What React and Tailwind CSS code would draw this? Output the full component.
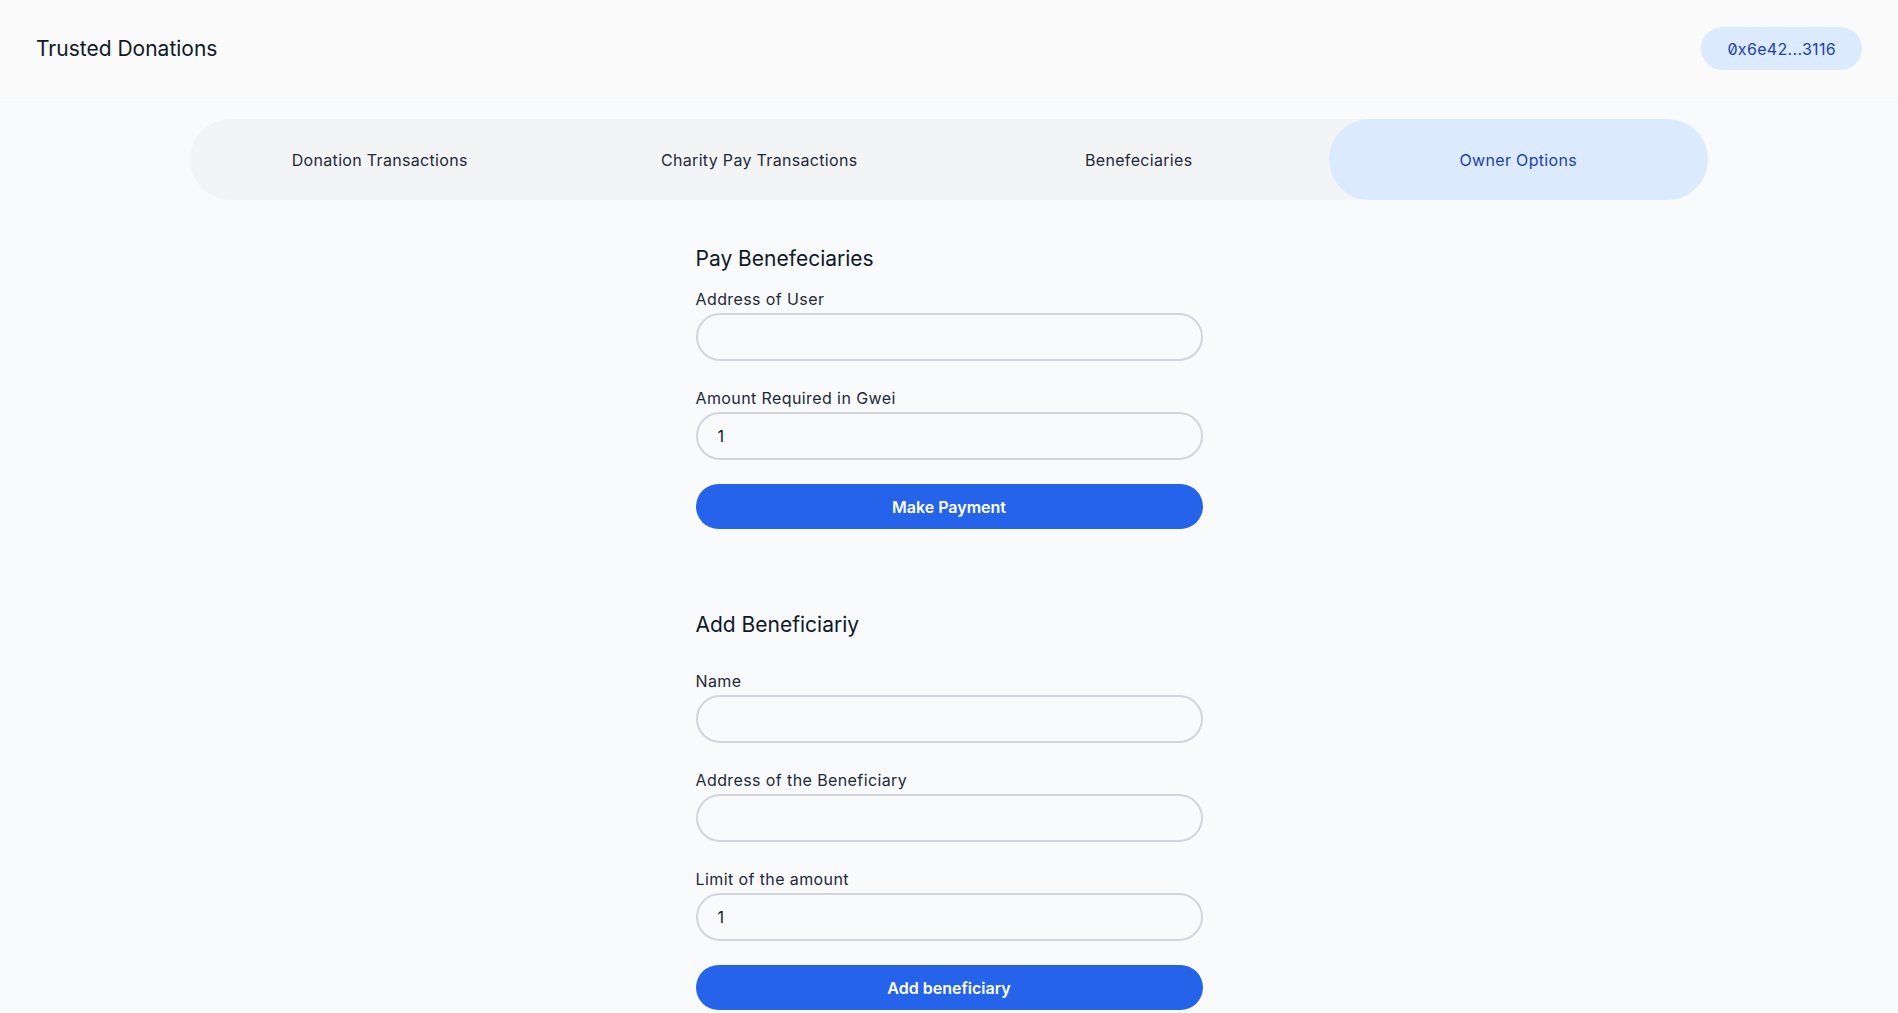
import { useState } from 'react';

const tabs = ['Donation Transactions', 'Charity Pay Transactions', 'Benefeciaries', 'Owner Options'];

function Field({ label, value, onChange, first }) {
  return (
    <div className={first ? '' : 'mt-[25px]'}>
      <label className="block text-base leading-6 tracking-[0.025em] text-gray-800">{label}</label>
      <input
        type="text"
        value={value}
        onChange={(e) => onChange(e.target.value)}
        className="mt-[2px] block h-12 w-full rounded-full border-2 border-gray-300 bg-transparent px-5 text-base text-gray-900 outline-none"
      />
    </div>
  );
}

export default function App() {
  const [active, setActive] = useState('Owner Options');
  const [userAddress, setUserAddress] = useState('');
  const [amount, setAmount] = useState('1');
  const [name, setName] = useState('');
  const [benAddress, setBenAddress] = useState('');
  const [limit, setLimit] = useState('1');

  return (
    <div className="min-h-screen bg-gray-50 font-['Inter',sans-serif] text-gray-900">
      <header className="flex h-[98px] items-center justify-between border-b border-gray-100 bg-[#fafafa] px-9">
        <h1 className="text-[21px] text-gray-900">Trusted Donations</h1>
        <button className="h-[43px] rounded-full bg-[#dbeafe] px-[26px] text-base tracking-[0.02em] text-[#1e40af] [font-feature-settings:'zero']">
          0x6e42...3116
        </button>
      </header>

      <nav className="mx-auto mt-[21px] grid h-[81px] w-[1518px] grid-cols-4 rounded-full bg-gray-100">
        {tabs.map((t) => (
          <button
            key={t}
            onClick={() => setActive(t)}
            className={
              active === t
                ? 'rounded-full bg-[#dbeafe] text-base tracking-[0.02em] text-[#1e40af]'
                : 'rounded-full text-base tracking-[0.02em] text-gray-800'
            }
          >
            {t}
          </button>
        ))}
      </nav>

      <div className="mx-auto w-[507px]">
        {/* Pay Benefeciaries */}
        <h2 className="mt-[45px] text-[21px] leading-7">Pay Benefeciaries</h2>
        <div className="mt-[14px]">
          <Field label="Address of User" value={userAddress} onChange={setUserAddress} first />
          <Field label="Amount Required in Gwei" value={amount} onChange={setAmount} />
        </div>
        <button className="mt-6 h-[45px] w-full rounded-full bg-[#2563eb] text-base font-semibold text-white">
          Make Payment
        </button>

        {/* Add Beneficiariy */}
        <h2 className="mt-[82px] text-[21px] leading-7">Add Beneficiariy</h2>
        <div className="mt-[30px]">
          <Field label="Name" value={name} onChange={setName} first />
          <Field label="Address of the Beneficiary" value={benAddress} onChange={setBenAddress} />
          <Field label="Limit of the amount" value={limit} onChange={setLimit} />
        </div>
        <button className="mt-6 h-[45px] w-full rounded-full bg-[#2563eb] text-base font-semibold text-white">
          Add beneficiary
        </button>
      </div>
    </div>
  );
}
